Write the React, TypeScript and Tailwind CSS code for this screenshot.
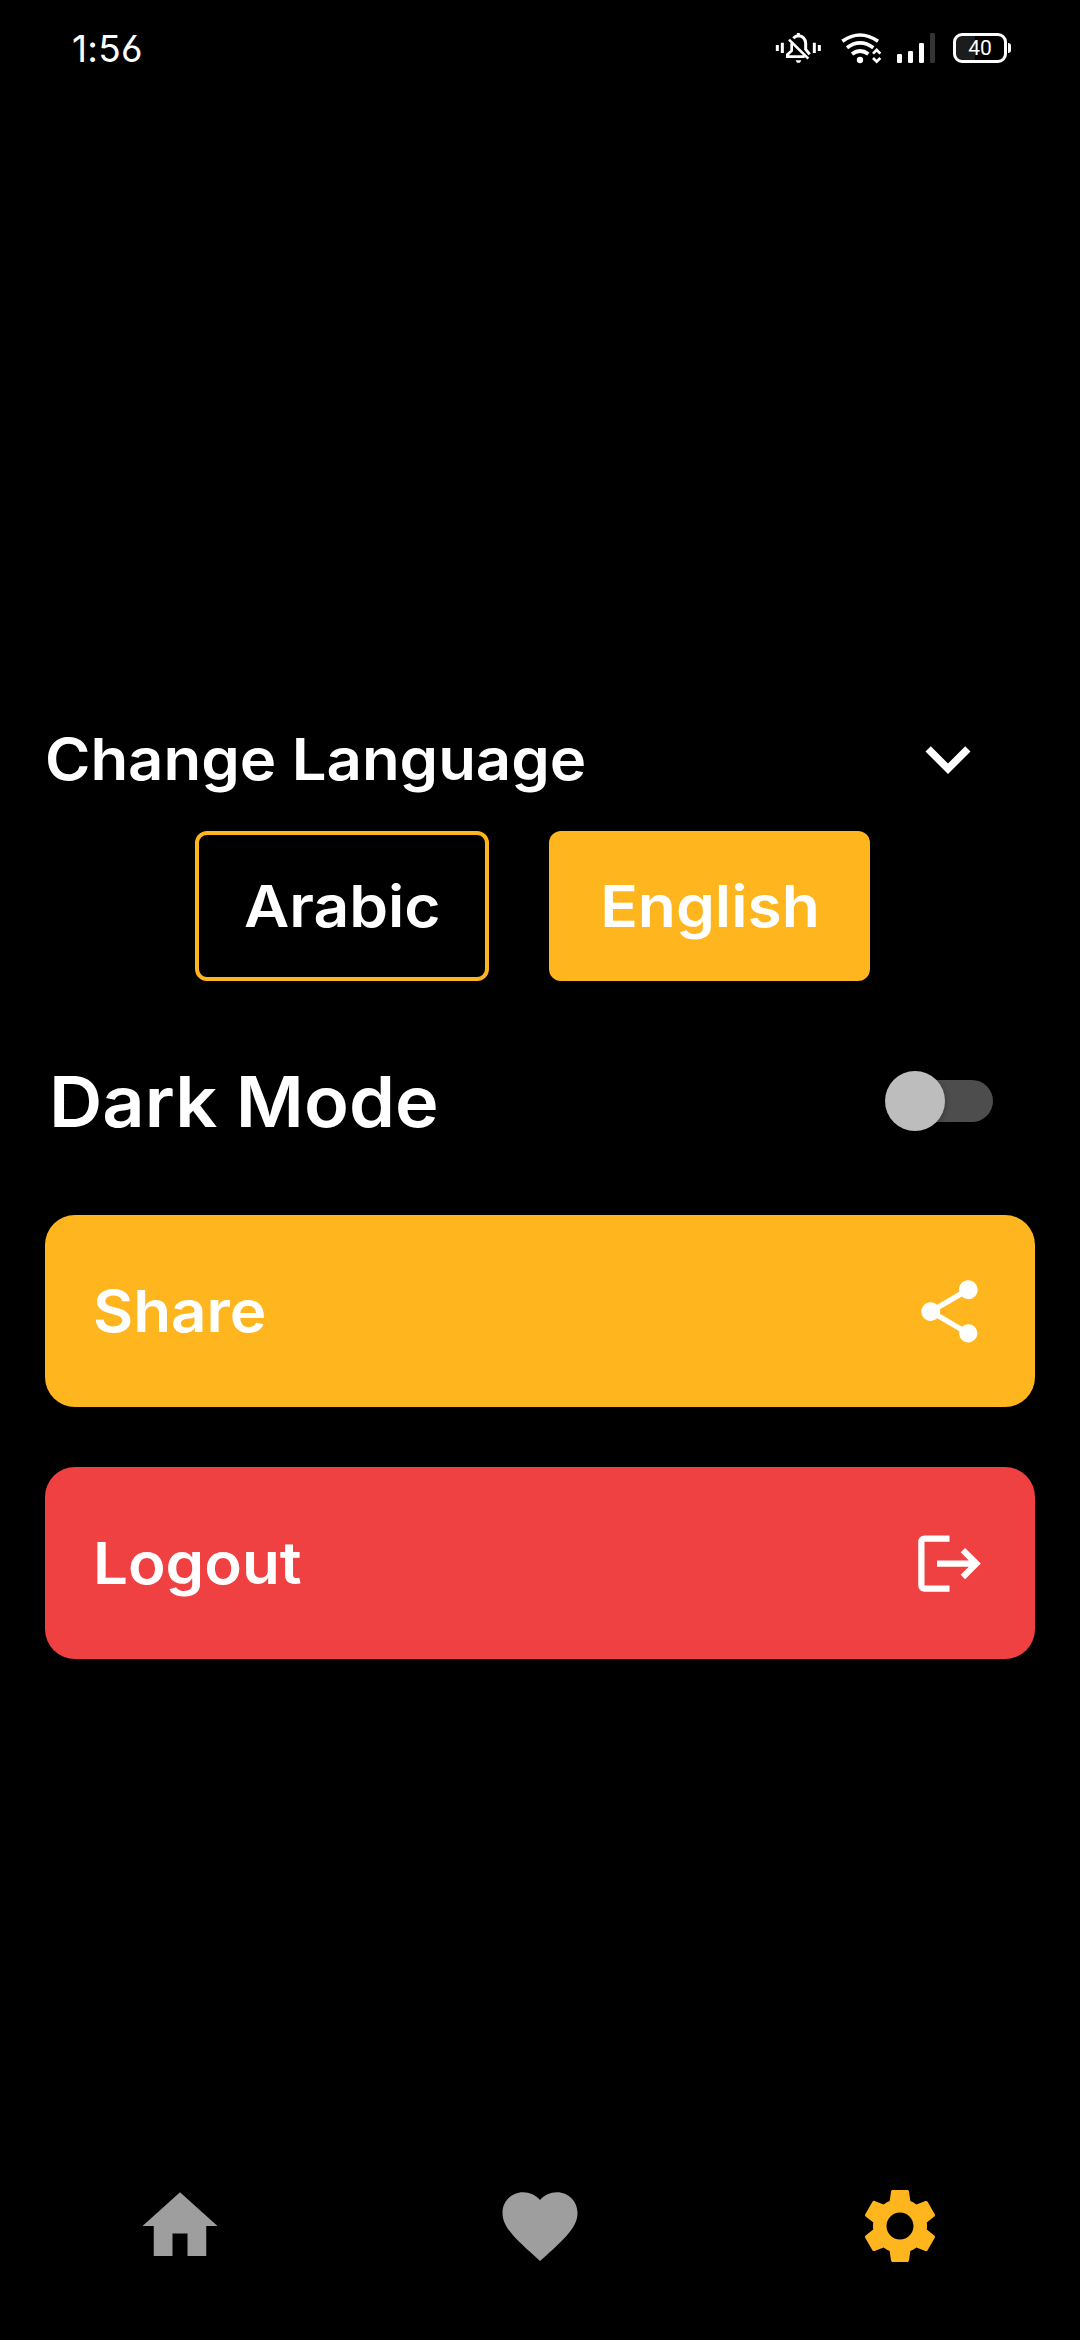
import React from "react";

const LABEL = "inline-block font-semibold leading-none whitespace-nowrap translate-y-px";

function VibrateMuted() {
  return (
    <svg viewBox="45 36 141 96" className="h-8 w-[47px]" fill="none" stroke="#fff" strokeWidth="9">
      <path d="M52 75v18M67 68v31M163 68v31M178 75v18" />
      <path d="M87 59l58 57" strokeWidth="8" />
      <path d="M100 55Q107 47 115 47Q136 49 137 70V88L149 103" />
      <path d="M95 70V92L82 104V110H134" strokeWidth="8" />
      <path d="M115 39v8" />
      <path d="M107 121h17l-4 7h-9z" fill="#fff" stroke="none" />
    </svg>
  );
}

function Wifi() {
  return (
    <svg viewBox="243 36 126 96" className="h-8 w-[42px]" fill="none" stroke="#fff" strokeWidth="11">
      <path d="M247 64Q300 26 354 64" />
      <path d="M261 83Q300 54 340 83" />
      <path d="M276 102Q300 84 325 102" />
      <circle cx="300" cy="120" r="9.5" fill="#fff" stroke="none" />
      <path d="M339 101l11-11 11 11M339 114l11 11 11-11" strokeWidth="8" />
    </svg>
  );
}

function Signal() {
  return (
    <svg viewBox="408 36 120 96" className="h-8 w-10" fill="#fff">
      <rect x="411" y="102" width="15" height="27" rx="4" />
      <rect x="444" y="93" width="15" height="36" rx="4" />
      <rect x="477" y="69" width="15" height="60" rx="4" />
      <rect x="510" y="39" width="15" height="90" rx="4" fill="#333" />
    </svg>
  );
}

function Battery() {
  return (
    <div className="flex items-center gap-px">
      <div className="flex h-[30px] w-[54px] items-center justify-center rounded-[9px] border-[3px] border-white bg-[linear-gradient(90deg,#1c1c1c_40%,#000_40%)] font-['Roboto',sans-serif] text-[21px] font-normal leading-none text-white">
        40
      </div>
      <div className="h-[10px] w-[3px] rounded-r-sm bg-white" />
    </div>
  );
}

function Icon({ d, className }: { d: string; className: string }) {
  return (
    <svg viewBox="0 0 24 24" fill="currentColor" className={className}>
      <path d={d} />
    </svg>
  );
}

const CHEVRON = "M7.41 8.59L12 13.17l4.59-4.58L18 10l-6 6-6-6z";
const SHARE =
  "M18 16.08c-.76 0-1.44.3-1.96.77L8.91 12.7c.05-.23.09-.46.09-.7s-.04-.47-.09-.7l7.05-4.11c.54.5 1.25.81 2.04.81 1.66 0 3-1.34 3-3s-1.34-3-3-3-3 1.34-3 3c0 .24.04.47.09.7L8.04 9.81C7.5 9.31 6.79 9 6 9c-1.66 0-3 1.34-3 3s1.34 3 3 3c.79 0 1.5-.31 2.04-.81l7.12 4.16c-.05.21-.08.43-.08.65 0 1.61 1.31 2.92 2.92 2.92s2.92-1.31 2.92-2.92-1.31-2.92-2.92-2.92z";
const LOGOUT =
  "M17 7l-1.41 1.41L18.17 11H8v2h10.17l-2.58 2.58L17 17l5-5zM4 5h8V3H4c-1.1 0-2 .9-2 2v14c0 1.1.9 2 2 2h8v-2H4V5z";
const HOME = "M10 20v-6h4v6h5v-8h3L12 3 2 12h3v8z";
const HEART =
  "M12 21.35l-1.45-1.32C5.4 15.36 2 12.28 2 8.5 2 5.42 4.42 3 7.5 3c1.74 0 3.41.81 4.5 2.09C13.09 3.81 14.76 3 16.5 3 19.58 3 22 5.42 22 8.5c0 3.78-3.4 6.86-8.55 11.54L12 21.35z";
const GEAR =
  "M19.14 12.94c.04-.3.06-.61.06-.94 0-.32-.02-.64-.07-.94l2.03-1.58c.18-.14.23-.41.12-.61l-1.92-3.32c-.12-.22-.37-.29-.59-.22l-2.39.96c-.5-.38-1.03-.7-1.62-.94l-.36-2.54c-.04-.24-.24-.41-.48-.41h-3.84c-.24 0-.43.17-.47.41l-.36 2.54c-.59.24-1.13.57-1.62.94l-2.39-.96c-.22-.08-.47 0-.59.22L2.74 8.87c-.12.21-.08.47.12.61l2.03 1.58c-.05.3-.09.63-.09.94s.02.64.07.94l-2.03 1.58c-.18.14-.23.41-.12.61l1.92 3.32c.12.22.37.29.59.22l2.39-.96c.5.38 1.03.7 1.62.94l.36 2.54c.05.24.24.41.48.41h3.84c.24 0 .44-.17.47-.41l.36-2.54c.59-.24 1.13-.56 1.62-.94l2.39.96c.22.08.47 0 .59-.22l1.92-3.32c.12-.22.07-.47-.12-.61l-2.01-1.58zM12 15.6c-1.98 0-3.6-1.62-3.6-3.6s1.62-3.6 3.6-3.6 3.6 1.62 3.6 3.6-1.62 3.6-3.6 3.6z";

export default function App() {
  return (
    <div className="flex h-[2340px] w-[1080px] flex-col overflow-hidden bg-black font-['Inter',sans-serif] text-white">
      <header className="flex h-24 items-center justify-between pl-[72px] pr-[69px]">
        <span className="text-[37px] leading-none tracking-[0.3px] [font-feature-settings:'ss01']">1:56</span>
        <div className="flex items-center">
          <VibrateMuted />
          <div className="ml-[19px] flex"><Wifi /></div>
          <div className="ml-[13px] flex"><Signal /></div>
          <div className="ml-[17px] flex"><Battery /></div>
        </div>
      </header>

      <main className="flex flex-1 flex-col px-[45px] pt-[618px]">
        <div className="flex h-[90px] items-center justify-between pr-[42px]">
          <h2 className={`${LABEL} origin-left scale-x-[1.066] text-[57.8px]`}>Change Language</h2>
          <Icon d={CHEVRON} className="size-[90px]" />
        </div>

        <div className="mt-[27px] flex gap-[60px] pl-[150px]">
          <button className="h-[150px] w-[294px] rounded-xl border-[4.5px] border-[#ffb61e]">
            <span className={`${LABEL} scale-x-[1.077] text-[57.8px]`}>Arabic</span>
          </button>
          <button className="h-[150px] w-[321px] rounded-xl bg-[#ffb61e]">
            <span className={`${LABEL} scale-x-[1.077] text-[57.8px]`}>English</span>
          </button>
        </div>

        <div className="mt-[75px] flex h-[90px] items-center justify-between pl-1 pr-[42px]">
          <h2 className={`${LABEL} origin-left scale-x-[1.055] text-[70px]`}>Dark Mode</h2>
          <div className="flex h-[42px] w-[102px] items-center rounded-full bg-[#4d4d4d]">
            <div className="-ml-1.5 size-[60px] shrink-0 rounded-full bg-[#bdbdbd] shadow-[0_2px_6px_rgba(0,0,0,0.3)]" />
          </div>
        </div>

        <button className="mt-[69px] flex h-48 items-center justify-between rounded-[30px] bg-[#ffb61e] px-12">
          <span className={`${LABEL} origin-left scale-x-[1.07] text-[57.8px]`}>Share</span>
          <Icon d={SHARE} className="size-[75px]" />
        </button>
        <button className="mt-[60px] flex h-48 items-center justify-between rounded-[30px] bg-[#f04142] px-12">
          <span className={`${LABEL} origin-left scale-x-[1.07] text-[57.8px]`}>Logout</span>
          <Icon d={LOGOUT} className="size-[75px]" />
        </button>
      </main>

      <nav className="grid h-[159px] grid-cols-3 justify-items-center">
        <Icon d={HOME} className="size-[90px] text-[#9e9e9e]" />
        <Icon d={HEART} className="size-[90px] text-[#9e9e9e]" />
        <Icon d={GEAR} className="size-[90px] text-[#ffb61e]" />
      </nav>
    </div>
  );
}
